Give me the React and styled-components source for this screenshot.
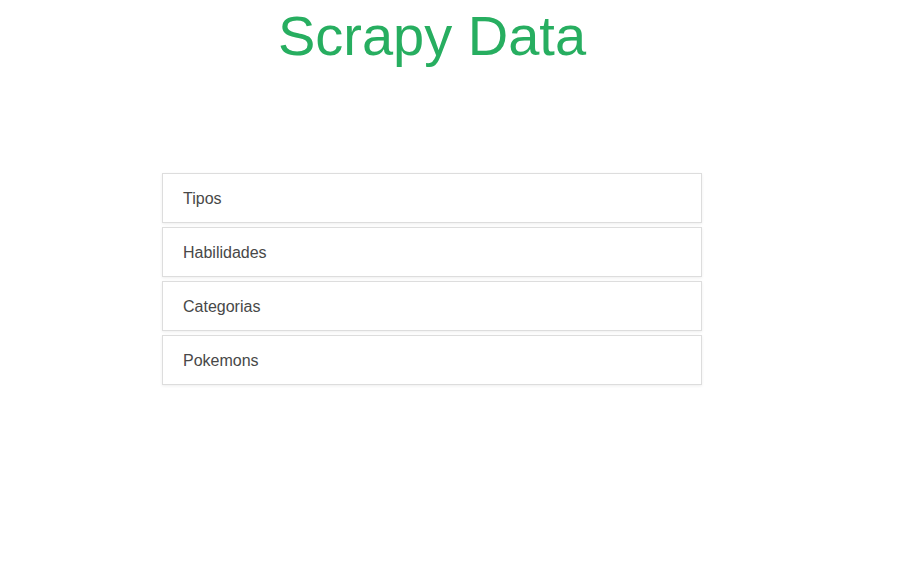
import React from 'react';
import styled, {createGlobalStyle} from "styled-components";

const GlobalStyle = createGlobalStyle`
  html, body {
    margin: 0;
    padding: 0;
    background: #fff;
    font-family: "Liberation Sans", Arial, sans-serif;
  }
`

const Page = styled.div`
  width: 902px;
  min-height: 581px;
`

const Title = styled.h1`
  margin: 4px 0 0 162px;
  width: 540px;
  text-align: center;
  font-size: 56px;
  font-weight: 400;
  line-height: 64px;
  color: #27ae60;
`

const List = styled.ul`
  list-style: none;
  margin: 105px 0 0 162px;
  padding: 0;
  width: 540px;
  display: flex;
  flex-direction: column;
  gap: 4px;
`

const Item = styled.li`
  box-sizing: border-box;
  height: 50px;
  padding: 2px 20px 0;
  display: flex;
  align-items: center;
  border: 1px solid #ddd;
  background: #fff;
  box-shadow: 0 1px 3px rgba(0, 0, 0, 0.07);
  font-size: 16px;
  color: #484848;
`

const items = ["Tipos", "Habilidades", "Categorias", "Pokemons"];

const App = () => {
    return (
        <Page>
            <GlobalStyle/>
            <Title>Scrapy Data</Title>
            <List>
                {items.map(name => <Item key={name}>{name}</Item>)}
            </List>
        </Page>
    );
};

export default App;
